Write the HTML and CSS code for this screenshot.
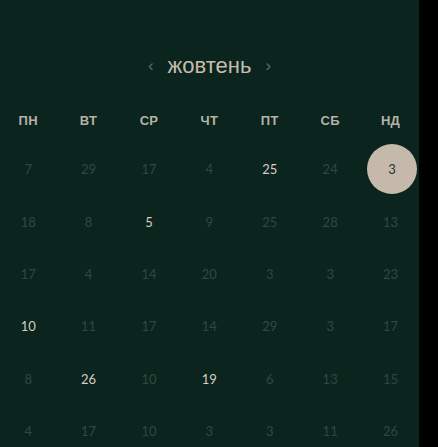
FILE: index.html
```html
<!DOCTYPE html>
<html lang="uk">
<head>
<meta charset="utf-8">
<link rel="stylesheet" href="styles.css">
</head>
<body>
<div class="panel">
  <div class="month">
    <span class="arrow">‹</span>
    <span class="month-name">жовтень</span>
    <span class="arrow">›</span>
  </div>
  <div class="grid weekdays">
    <div>ПН</div><div>ВТ</div><div>СР</div><div>ЧТ</div><div>ПТ</div><div>СБ</div><div>НД</div>
  </div>
  <div class="grid days">
    <div class="d">7</div><div class="d">29</div><div class="d">17</div><div class="d">4</div><div class="d on">25</div><div class="d">24</div><div class="d sel"><span>3</span></div>
    <div class="d">18</div><div class="d">8</div><div class="d on">5</div><div class="d">9</div><div class="d">25</div><div class="d">28</div><div class="d">13</div>
    <div class="d">17</div><div class="d">4</div><div class="d">14</div><div class="d">20</div><div class="d">3</div><div class="d">3</div><div class="d">23</div>
    <div class="d on">10</div><div class="d">11</div><div class="d">17</div><div class="d">14</div><div class="d">29</div><div class="d">3</div><div class="d">17</div>
    <div class="d">8</div><div class="d on">26</div><div class="d">10</div><div class="d on">19</div><div class="d">6</div><div class="d">13</div><div class="d">15</div>
    <div class="d">4</div><div class="d">17</div><div class="d">10</div><div class="d">3</div><div class="d">3</div><div class="d">11</div><div class="d">26</div>
  </div>
</div>
</body>
</html>
```

FILE: styles.css
```css
html, body {
  margin: 0;
  padding: 0;
  background: #000;
  height: 100%;
  overflow: hidden;
}
.panel {
  width: 419px;
  height: 447px;
  background: #0b241d;
  padding-top: 53px;
  box-sizing: border-box;
  font-family: "Liberation Sans", Arial, sans-serif;
}
.month {
  display: flex;
  justify-content: center;
  align-items: center;
  gap: 14px;
  height: 26px;
}
.month-name {
  font-size: 22px;
  color: #c7bcae;
  line-height: 26px;
}
.arrow {
  font-size: 17px;
  color: #5d6d65;
  line-height: 26px;
}
.grid {
  display: grid;
  grid-template-columns: repeat(7, 60.4px);
  margin-left: -2px;
  justify-items: center;
}
.weekdays {
  margin-top: 29px;
  height: 24px;
  align-items: center;
  font-weight: bold;
  font-size: 13px;
  letter-spacing: 0.3px;
  color: #b5b2a8;
}
.days {
  margin-top: 11px;
  grid-auto-rows: 52.4px;
  align-items: center;
  font-family: Lato, "Liberation Sans", sans-serif;
  font-size: 13px;
  color: #2f4941;
}
.d.on {
  color: #d6cec2;
}
.d.sel span {
  display: flex;
  align-items: center;
  justify-content: center;
  width: 50px;
  height: 50px;
  border-radius: 50%;
  background: #c5b9ab;
  color: #1c3832;
}
.d.sel {
  margin-left: 3px;
}
```
